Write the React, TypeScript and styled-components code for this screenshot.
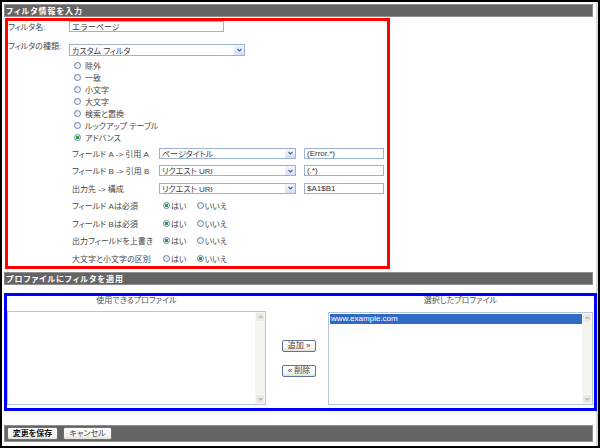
import React from 'react';
import styled, { createGlobalStyle, css } from 'styled-components';

const GlobalStyle = createGlobalStyle`
  html, body { margin: 0; padding: 0; background: #fff; }
  body { font-family: "Liberation Sans", "Noto Sans CJK JP", sans-serif; }
`;

const FONT = `"Liberation Sans", "Noto Sans CJK JP", sans-serif`;

const Frame = styled.div`
  width: 600px;
  height: 448px;
  box-sizing: border-box;
  border: 2px solid #000;
  background: #fff;
  overflow: hidden;
  font-family: ${FONT};
  font-size: 8px;
  font-feature-settings: "palt";
  color: #474747;
`;

const Inner = styled.div`
  height: 100%;
  box-sizing: border-box;
  padding: 2px 3px 0 2px;
  border-right: 2px solid #d9d9d9;
  display: flex;
  flex-direction: column;
`;

const SectionBar = styled.div<{ $top?: number }>`
  height: 13px;
  flex-shrink: 0;
  box-sizing: border-box;
  margin-top: ${p => p.$top ?? 0}px;
  background: #646464;
  border: 1px solid #8f8f8f;
  color: #fff;
  font-weight: bold;
  letter-spacing: 1px;
  padding-left: 1px;
  display: flex;
  align-items: center;
`;

const FilterBox = styled.div`
  margin: 1px 0 0 1px;
  width: 385px;
  height: 251px;
  flex-shrink: 0;
  box-sizing: border-box;
  border: 3px solid #ff0000;
  display: flex;
  flex-direction: column;
`;

const FormRow = styled.div<{ $top?: number }>`
  display: flex;
  align-items: center;
  height: 12px;
  margin-top: ${p => p.$top ?? 0}px;
`;

const FormLabel = styled.div<{ $top?: boolean }>`
  width: 61px;
  box-sizing: border-box;
  ${p => p.$top && css`
    align-self: flex-start;
    line-height: 8px;
    margin-top: -1px;
  `}
`;

const TextInput = styled.input<{ $width: number }>`
  width: ${p => p.$width}px;
  height: 11px;
  box-sizing: border-box;
  border: 1px solid #9cb2d2;
  padding: 0 0 0 2px;
  margin: 0;
  font-family: ${FONT};
  font-size: 8px;
  color: #333;
  background: #fff;
  outline: none;
`;

const SelectBox = styled.div<{ $width: number; $height?: number }>`
  width: ${p => p.$width}px;
  height: ${p => p.$height ?? 11}px;
  box-sizing: border-box;
  border: 1px solid #9cb2d2;
  background: #fff;
  display: flex;
  align-items: stretch;
`;

const SelectText = styled.span`
  flex: 1;
  padding-left: 2px;
  display: flex;
  align-items: center;
  color: #3a3a3a;
`;

const SelectArrow = styled.span`
  width: 10px;
  border-left: 1px solid #fff;
  background: linear-gradient(#f3f6fd, #d3def7);
  display: flex;
  align-items: center;
  justify-content: center;
`;

const RadioList = styled.div`
  margin-top: 3px;
  padding-left: 66px;
  display: flex;
  flex-direction: column;
`;

const RadioItem = styled.label`
  height: 12px;
  display: flex;
  align-items: center;
  gap: 4px;
`;

const RadioDot = styled.span<{ $checked?: boolean }>`
  width: 7px;
  height: 7px;
  flex-shrink: 0;
  box-sizing: border-box;
  border-radius: 50%;
  border: 1px solid #6482b0;
  background: ${p =>
    p.$checked
      ? 'radial-gradient(circle, #2ea52e 0 1.6px, #f6f6f2 1.8px)'
      : 'linear-gradient(135deg, #e2e2dc, #ffffff)'};
`;

const FieldList = styled.div`
  margin-top: 1px;
  padding-left: 64px;
  display: flex;
  flex-direction: column;
`;

const FieldRow = styled.div`
  height: 18px;
  display: flex;
  align-items: center;

  &:nth-child(even) {
    height: 17px;
  }
`;

const FieldLabel = styled.div`
  width: 87px;
  flex-shrink: 0;
`;

const FieldControls = styled.div`
  display: flex;
  align-items: center;
  gap: 8px;
`;

const YesNo = styled.div`
  display: flex;
  align-items: center;
  padding-left: 4px;
  gap: 10px;
`;

const YesNoOption = styled.label`
  display: flex;
  align-items: center;
  gap: 1px;
`;

const ProfileBox = styled.div`
  margin: 8px -4px 0 0;
  height: 118px;
  flex-shrink: 0;
  box-sizing: border-box;
  border: 3px solid #0000ff;
  padding: 0 1px 3px 0;
  display: grid;
  grid-template-columns: 259px 62px 1fr;
  grid-template-rows: 15px 1fr;
`;

const ColumnTitle = styled.div`
  text-align: center;
  line-height: 9px;
  color: #505050;
`;

const ListBox = styled.div<{ $top?: number }>`
  border: 1px solid #b3c4dc;
  background: #fff;
  display: flex;
  margin-top: ${p => p.$top ?? 0}px;
`;

const ListItems = styled.div`
  flex: 1;
  padding: 1px 0 0 1px;
`;

const ListItem = styled.div<{ $selected?: boolean }>`
  height: 10px;
  line-height: 10px;
  padding-left: 1px;
  ${p => p.$selected && css`
    background: #316ac5;
    color: #fff;
  `}
`;

const ScrollTrack = styled.div`
  width: 10px;
  background: #f5f4ef;
  display: flex;
  flex-direction: column;
  justify-content: space-between;
`;

const ScrollButton = styled.div`
  height: 10px;
  background: #ebeae4;
  border: 1px solid #f8f8f5;
  box-sizing: border-box;
  display: flex;
  align-items: center;
  justify-content: center;
`;

const MoveColumn = styled.div`
  display: flex;
  flex-direction: column;
  align-items: center;
  justify-content: center;
  gap: 13px;
  padding-left: 4px;
`;

const Button = styled.button<{ $width: number; $height?: number; $bold?: boolean }>`
  width: ${p => p.$width}px;
  height: ${p => p.$height ?? 12}px;
  padding: 0;
  margin: 0;
  box-sizing: border-box;
  border: 1px solid #5a76a0;
  border-radius: 2px;
  background: linear-gradient(#ffffff, #f5f4f0 70%, #e2e0d8);
  font-family: ${FONT};
  font-size: 8px;
  font-feature-settings: "palt";
  font-weight: ${p => (p.$bold ? 'bold' : 'normal')};
  color: ${p => (p.$bold ? '#111' : '#444')};
  line-height: 1;
`;

const Footer = styled.div`
  margin-top: 14px;
  height: 17px;
  flex-shrink: 0;
  box-sizing: border-box;
  background: #646464;
  border: 1px solid #8f8f8f;
  padding-left: 2px;
  display: flex;
  align-items: center;
  gap: 5px;
`;

const Chevron = ({ up, color = '#4b5f8f' }: { up?: boolean; color?: string }) => (
  <svg width="5" height="4" viewBox="0 0 5 4">
    <polyline
      points={up ? '0.5,3 2.5,1 4.5,3' : '0.5,1 2.5,3 4.5,1'}
      fill="none"
      stroke={color}
      strokeWidth="1.1"
    />
  </svg>
);

const Select = ({ width, height, value }: { width: number; height?: number; value: string }) => (
  <SelectBox $width={width} $height={height}>
    <SelectText>{value}</SelectText>
    <SelectArrow>
      <Chevron />
    </SelectArrow>
  </SelectBox>
);

const Scrollbar = () => (
  <ScrollTrack>
    <ScrollButton>
      <Chevron up color="#b5b4ac" />
    </ScrollButton>
    <ScrollButton>
      <Chevron color="#b5b4ac" />
    </ScrollButton>
  </ScrollTrack>
);

const filterTypes = ['除外', '一致', '小文字', '大文字', '検索と置換', 'ルックアップ テーブル', 'アドバンス'];

const mappings = [
  { label: 'フィールド A -> 引用 A', select: 'ページタイトル', input: '(Error.*)' },
  { label: 'フィールド B -> 引用 B', select: 'リクエスト URI', input: '(.*)' },
  { label: '出力先 -> 構成', select: 'リクエスト URI', input: '$A1$B1' },
];

const switches = [
  { label: 'フィールド Aは必須', yes: true },
  { label: 'フィールド Bは必須', yes: true },
  { label: '出力フィールドを上書き', yes: true },
  { label: '大文字と小文字の区別', yes: false },
];

export default function App() {
  return (
    <>
      <GlobalStyle />
      <Frame>
        <Inner>
          <SectionBar>フィルタ情報を入力</SectionBar>
          <FilterBox>
            <FormRow>
              <FormLabel>フィルタ名:</FormLabel>
              <TextInput $width={155} readOnly defaultValue="エラーページ" />
            </FormRow>
            <FormRow $top={12}>
              <FormLabel $top>フィルタの種類:</FormLabel>
              <Select width={176} height={12} value="カスタム フィルタ" />
            </FormRow>
            <RadioList>
              {filterTypes.map((t, i) => (
                <RadioItem key={t}>
                  <RadioDot $checked={i === filterTypes.length - 1} />
                  {t}
                </RadioItem>
              ))}
            </RadioList>
            <FieldList>
              {mappings.map(m => (
                <FieldRow key={m.label}>
                  <FieldLabel>{m.label}</FieldLabel>
                  <FieldControls>
                    <Select width={137} value={m.select} />
                    <TextInput $width={80} readOnly defaultValue={m.input} />
                  </FieldControls>
                </FieldRow>
              ))}
              {switches.map(s => (
                <FieldRow key={s.label}>
                  <FieldLabel>{s.label}</FieldLabel>
                  <YesNo>
                    <YesNoOption>
                      <RadioDot $checked={s.yes} />
                      はい
                    </YesNoOption>
                    <YesNoOption>
                      <RadioDot $checked={!s.yes} />
                      いいえ
                    </YesNoOption>
                  </YesNo>
                </FieldRow>
              ))}
            </FieldList>
          </FilterBox>

          <SectionBar $top={3}>プロファイルにフィルタを適用</SectionBar>
          <ProfileBox>
            <ColumnTitle>使用できるプロファイル</ColumnTitle>
            <div />
            <ColumnTitle>選択したプロファイル</ColumnTitle>
            <ListBox>
              <ListItems />
              <Scrollbar />
            </ListBox>
            <MoveColumn>
              <Button $width={34}>追加 »</Button>
              <Button $width={34}>« 削除</Button>
            </MoveColumn>
            <ListBox $top={1}>
              <ListItems>
                <ListItem $selected>www.example.com</ListItem>
              </ListItems>
              <Scrollbar />
            </ListBox>
          </ProfileBox>

          <Footer>
            <Button $width={51} $height={13} $bold>変更を保存</Button>
            <Button $width={49} $height={13}>キャンセル</Button>
          </Footer>
        </Inner>
      </Frame>
    </>
  );
}
